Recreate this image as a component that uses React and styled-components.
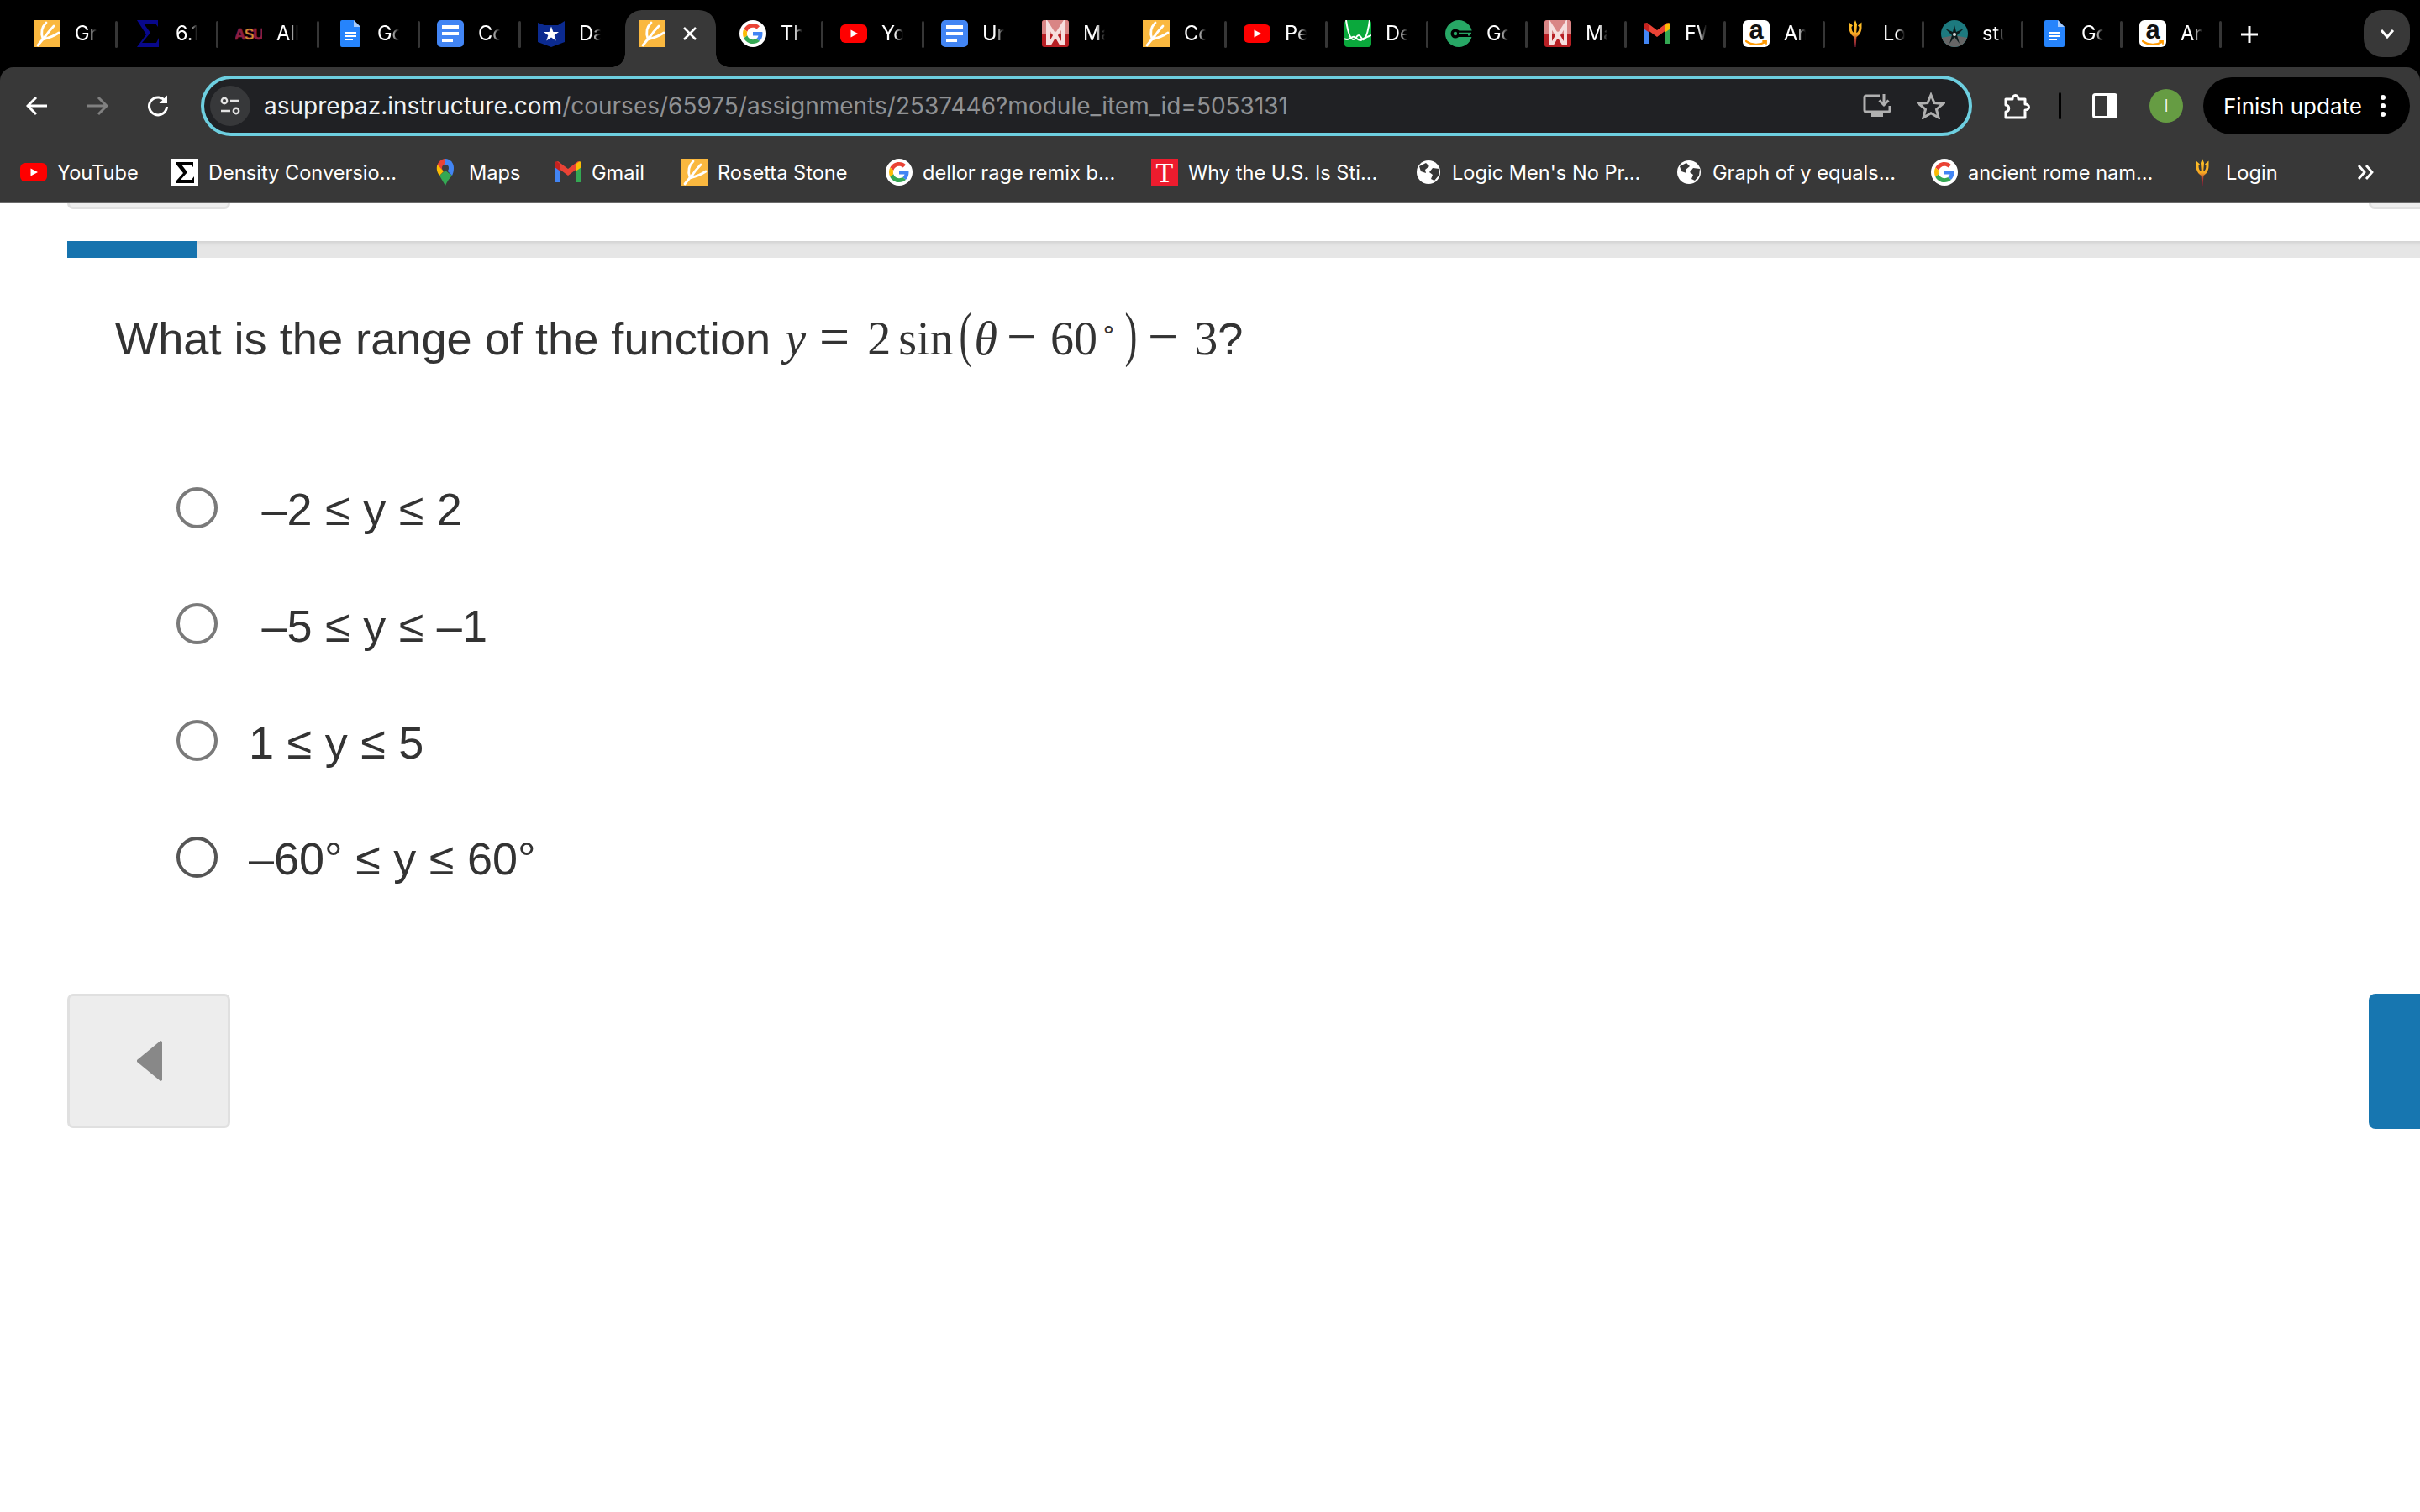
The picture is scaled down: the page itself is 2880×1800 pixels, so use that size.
import styled, { createGlobalStyle } from 'styled-components'

const GlobalStyle = createGlobalStyle`
  html, body {
    margin: 0;
    padding: 0;
    height: 100%;
    background: #fff;
    overflow: hidden;
  }
  #root { height: 100%; }
  * { box-sizing: border-box; }
`

const Window = styled.div`
  width: 2880px;
  height: 1800px;
  overflow: hidden;
  background: #000;
  display: flex;
  flex-direction: column;
  font-family: Inter, "Liberation Sans", sans-serif;
`

/* ---- tab strip ---- */
const TabStrip = styled.div`
  height: 80px;
  flex: none;
  display: flex;
  padding: 12px 12px 0 18px;
  background: #000;
`

const Tab = styled.div`
  position: relative;
  width: ${p => p.$w}px;
  flex: none;
  height: 68px;
  display: flex;
  align-items: center;
  padding: 0 0 12px 22px;
  color: #fff;

  &::after {
    content: '';
    display: ${p => (p.$noSep ? 'none' : 'block')};
    position: absolute;
    right: -2px;
    top: 13px;
    width: 3px;
    height: 32px;
    border-radius: 2px;
    background: #363636;
  }
`

const ActiveTab = styled.div`
  position: relative;
  width: 108px;
  flex: none;
  height: 68px;
  margin: 0 6px;
  display: flex;
  align-items: center;
  padding: 0 0 12px 16px;
  background: #383838;
  border-radius: 20px 20px 0 0;

  &::before, &::after {
    content: '';
    position: absolute;
    bottom: 0;
    width: 16px;
    height: 16px;
  }
  &::before {
    left: -16px;
    background: radial-gradient(circle at 0 0, transparent 15.5px, #383838 16px);
  }
  &::after {
    right: -16px;
    background: radial-gradient(circle at 100% 0, transparent 15.5px, #383838 16px);
  }
`

const FaviconBox = styled.span`
  width: 32px;
  height: 32px;
  flex: none;
  display: block;
  svg { display: block; }
`

const TabTitle = styled.span`
  margin-left: 17px;
  width: 26px;
  overflow: hidden;
  white-space: nowrap;
  font-size: 23.6px;
  line-height: 32px;
  -webkit-mask-image: linear-gradient(to right, #000 60%, transparent 100%);
  mask-image: linear-gradient(to right, #000 60%, transparent 100%);
`

const CloseIcon = styled.svg`
  margin-left: 19px;
  width: 20px;
  height: 20px;
  flex: none;
`

const NewTab = styled.svg`
  margin: 18px 0 0 24px;
  width: 22px;
  height: 22px;
  flex: none;
`

const TabSearch = styled.div`
  margin-left: auto;
  width: 55px;
  height: 56px;
  flex: none;
  display: flex;
  align-items: center;
  justify-content: center;
  border-radius: 22px;
  background: #383838;
`

/* ---- toolbar ---- */
const Toolbar = styled.div`
  height: 92px;
  flex: none;
  display: flex;
  align-items: center;
  padding-left: 8px;
  background: #383838;
  border-radius: 16px 16px 0 0;
`

const NavButton = styled.div`
  width: 72px;
  height: 48px;
  margin-left: ${p => p.$ml || 0}px;
  flex: none;
  display: flex;
  align-items: center;
  justify-content: center;
`

const Omnibox = styled.div`
  width: 2108px;
  height: 72px;
  margin-left: 15px;
  flex: none;
  display: flex;
  align-items: center;
  padding: 0 28px 0 7px;
  background: #202124;
  border: 4px solid #6dcfe0;
  border-radius: 36px;
`

const SiteChip = styled.div`
  width: 48px;
  height: 48px;
  flex: none;
  display: flex;
  align-items: center;
  justify-content: center;
  border-radius: 50%;
  background: #37383a;
`

const Url = styled.div`
  margin-left: 16px;
  font-size: 28px;
  white-space: nowrap;
  color: #8f9194;
`

const Domain = styled.span`
  color: #f1f3f4;
`

const OmniActions = styled.div`
  margin-left: auto;
  display: flex;
  align-items: center;
  gap: 30px;
`

const ToolDivider = styled.div`
  width: 3px;
  height: 32px;
  margin-left: 14px;
  flex: none;
  border-radius: 2px;
  background: #000;
`

const Avatar = styled.div`
  width: 40px;
  height: 40px;
  margin-left: 17px;
  flex: none;
  display: flex;
  align-items: center;
  justify-content: center;
  border-radius: 50%;
  background: #669c43;
  color: #fff;
  font-size: 20px;
  font-weight: 300;
`

const UpdatePill = styled.div`
  width: 246px;
  height: 68px;
  margin-left: 24px;
  flex: none;
  display: flex;
  align-items: center;
  justify-content: space-between;
  padding: 0 28px 0 24px;
  border-radius: 34px;
  background: #000;
  color: #fff;
  font-size: 26px;
  white-space: nowrap;
`

const Kebab = styled.svg`
  width: 8px;
  height: 28px;
  flex: none;
`

/* ---- bookmarks bar ---- */
const BookmarksBar = styled.div`
  height: 70px;
  flex: none;
  display: flex;
  align-items: center;
  padding: 0 0 2px 24px;
  background: #383838;
  border-bottom: 2px solid #6b6b6b;
`

const Bookmark = styled.div`
  width: ${p => p.$w}px;
  flex: none;
  display: flex;
  align-items: center;
  color: #fff;
  font-size: 23.6px;
  white-space: nowrap;
`

const BookmarkLabel = styled.span`
  margin-left: 12px;
`

const Overflow = styled.svg`
  margin-left: 99px;
  width: 22px;
  height: 20px;
  flex: none;
`

/* ---- canvas page ---- */
const Page = styled.main`
  width: 3013px;
  flex: 1;
  padding-left: 80px;
  background: #fff;
  color: #333;
  font-family: "Liberation Sans", Arial, sans-serif;
`

const StubRow = styled.div`
  display: flex;
  justify-content: space-between;
  height: 7px;
`

const Stub = styled.div`
  width: 194px;
  height: 7px;
  background: #eee;
  border: 3px solid #e0e0e0;
  border-top: none;
  border-radius: 0 0 8px 8px;
`

const Progress = styled.div`
  height: 20px;
  margin-top: 38px;
  background: #e6e6e6;
  box-shadow: inset 0 5px 5px -3px #cfcfcf;
`

const ProgressFill = styled.div`
  width: ${p => p.$w}px;
  height: 100%;
  background: #1673ae;
`

const Question = styled.div`
  margin: 51px 0 0 57px;
  height: 80px;
  font-size: 54.2px;
  line-height: 80px;
  white-space: pre;
`

const MathRun = styled.span`
  margin-left: ${p => p.$ml || 0}px;
  font-family: "Liberation Serif", "Times New Roman", serif;
  font-size: 56px;
  font-style: ${p => (p.$italic ? 'italic' : 'normal')};
`

const MathOp = styled.span`
  margin-left: ${p => p.$ml || 0}px;
  font-family: "Liberation Serif", "Times New Roman", serif;
  font-size: 64px;
  font-weight: 300;
`

const MathParen = styled.span`
  display: inline-block;
  margin-left: ${p => p.$ml || 0}px;
  font-family: "Liberation Serif", "Times New Roman", serif;
  font-size: 72px;
  transform: scaleX(0.62);
`

const MathDegree = styled.span`
  margin-left: ${p => p.$ml || 0}px;
  font-family: "Liberation Serif", "Times New Roman", serif;
  font-size: 30px;
  vertical-align: 20px;
  line-height: 0;
`

const Options = styled.div`
  margin: 97px 0 0 130px;
`

const Option = styled.label`
  height: 138.67px;
  display: flex;
  align-items: center;
  gap: 37px;
`

const Radio = styled.span`
  width: 49px;
  height: 49px;
  flex: none;
  border: 4px solid ${p => (p.$hover ? '#555' : '#7a7a7a')};
  border-radius: 50%;
  background: #fff;
`

const OptionText = styled.span`
  padding-top: 4px;
  font-size: 54px;
  line-height: 60px;
  word-spacing: 0.5px;
  white-space: pre;
`

const Footer = styled.div`
  margin-top: 93px;
  display: flex;
  justify-content: space-between;
`

const PrevButton = styled.div`
  width: 194px;
  height: 160px;
  display: flex;
  align-items: center;
  justify-content: center;
  background: #ededed;
  border: 3px solid #e0e0e0;
  border-radius: 7px;
`

const NextButton = styled.div`
  width: 194px;
  height: 161px;
  background: #1776b0;
  border-radius: 8px;
`

/* ---- favicons ---- */
const Rosetta = () => (
  <svg width="32" height="32" viewBox="0 0 32 32">
    <rect width="32" height="32" fill="#fab83f" />
    <g fill="none" stroke="#fff" strokeWidth="2.8" strokeLinecap="round">
      <path d="M5 30L14 19" />
      <path d="M15 3C10 8 8 14 11 22" />
      <path d="M24 7C20 11 16 16 12 22" />
      <path d="M30 15C24 19 19 21 11 23" />
    </g>
  </svg>
)

const SigmaBlue = () => (
  <svg width="32" height="32" viewBox="0 0 32 32">
    <path fill="#08088c" d="M3 0H28V8L25 4H11L19 15L9 27H26L29 21V32H3L14 17Z" />
  </svg>
)

const AsuMark = () => (
  <svg width="32" height="32" viewBox="0 0 32 32">
    <text x="16" y="22.5" textAnchor="middle" fontFamily="Liberation Sans" fontWeight="700" fontSize="18" letterSpacing="-1.4" stroke="#8c1d40" strokeWidth="0.7">
      <tspan fill="#8c1d40">A</tspan><tspan fill="#d19a2a">S</tspan><tspan fill="#8c1d40">U</tspan>
    </text>
  </svg>
)

const DocsPage = () => (
  <svg width="32" height="32" viewBox="0 0 32 32">
    <path fill="#2684fc" d="M7 0H21L29 8V30A2 2 0 0 1 27 32H7A2 2 0 0 1 5 30V2A2 2 0 0 1 7 0Z" />
    <path fill="#a9ccfb" d="M21 0L29 8H21Z" />
    <path fill="#fff" d="M10 14H24V16H10ZM10 18H24V20H10ZM10 22H20V24H10Z" />
  </svg>
)

const DocsSquare = () => (
  <svg width="32" height="32" viewBox="0 0 32 32">
    <rect width="32" height="32" rx="5" fill="#4285f4" />
    <path fill="#fff" d="M6 6H26V10.5H6ZM6 14H26V18H6ZM6 22H19V26H6Z" />
  </svg>
)

const Shield = () => (
  <svg width="32" height="32" viewBox="0 0 32 32">
    <path fill="#0b2a8f" d="M0 3L8 6H24L32 1V26L16 32L0 26Z" />
    <path fill="#fff" d="M16 7.5L18.4 14H25L19.7 18L21.7 24.5L16 20.6L10.3 24.5L12.3 18L7 14H13.6Z" />
  </svg>
)

const GoogleG = () => (
  <svg width="32" height="32" viewBox="0 0 32 32">
    <circle cx="16" cy="16" r="16" fill="#fff" />
    <g transform="translate(4 4) scale(0.5)">
      <path fill="#EA4335" d="M24 9.5c3.54 0 6.71 1.22 9.21 3.6l6.85-6.85C35.9 2.38 30.47 0 24 0 14.62 0 6.51 5.38 2.56 13.22l7.98 6.19C12.43 13.72 17.74 9.5 24 9.5z" />
      <path fill="#4285F4" d="M46.98 24.55c0-1.57-.15-3.09-.38-4.55H24v9.02h12.94c-.58 2.96-2.26 5.48-4.78 7.18l7.73 6c4.51-4.18 7.09-10.36 7.09-17.65z" />
      <path fill="#FBBC05" d="M10.53 28.59c-.48-1.45-.76-2.99-.76-4.59s.27-3.14.76-4.59l-7.98-6.19C.92 16.46 0 20.12 0 24c0 3.88.92 7.54 2.56 10.78l7.97-6.19z" />
      <path fill="#34A853" d="M24 48c6.48 0 11.93-2.13 15.89-5.81l-7.73-6c-2.15 1.45-4.92 2.3-8.16 2.3-6.26 0-11.57-4.22-13.47-9.91l-7.98 6.19C6.51 42.62 14.62 48 24 48z" />
    </g>
  </svg>
)

const YouTube = () => (
  <svg width="32" height="32" viewBox="0 0 32 32">
    <rect y="5" width="32" height="22" rx="6" fill="#f00" />
    <path fill="#fff" d="M12.5 11.5L21 16L12.5 20.5Z" />
  </svg>
)

const Mathia = () => (
  <svg width="32" height="32" viewBox="0 0 32 32">
    <rect width="32" height="32" rx="3" fill="#b71f24" />
    <path fill="#d98585" d="M3 0H29A3 3 0 0 1 32 3V16H0V3A3 3 0 0 1 3 0Z" />
    <path fill="none" stroke="#f6dede" strokeWidth="4" d="M7 29V5L16 19L25 5V29M9 29L16 17L23 29" />
  </svg>
)

const Desmos = () => (
  <svg width="32" height="32" viewBox="0 0 32 32">
    <rect width="32" height="32" rx="4" fill="#0aa83c" />
    <path fill="none" stroke="#fff" strokeWidth="2" d="M2 0C4 14 7 23 11 23C14 23 14 18 17 18C20 18 21 26 24 22C27 18 29 8 30 0" />
    <path fill="none" stroke="#fff" strokeWidth="2" d="M0 22C6 26 8 18 12 20C15 22 18 26 21 23C24 21 27 20 32 18" />
  </svg>
)

const KeyCircle = () => (
  <svg width="32" height="32" viewBox="0 0 32 32">
    <circle cx="16" cy="16" r="16" fill="#27a765" />
    <path fill="#000" d="M13 12.5H32V20H13Z" />
    <circle cx="12" cy="16" r="5.5" fill="#000" />
    <circle cx="12" cy="16" r="2.2" fill="#27a765" />
    <path fill="#27a765" d="M16 14.8H31V16.8H29V18.6H27V16.8H16Z" />
  </svg>
)

const Gmail = () => (
  <svg width="32" height="32" viewBox="0 0 32 32">
    <path fill="#4285f4" d="M0 8V27A1.5 1.5 0 0 0 1.5 28H7V13Z" />
    <path fill="#34a853" d="M25 13V28H30.5A1.5 1.5 0 0 0 32 27V8Z" />
    <path fill="#ea4335" d="M0 8L16 20L32 8L32 5L28 3L16 12L4 3L0 5Z" />
    <path fill="#fbbc04" d="M25 6.5L29 3.5C30.5 2.6 32 4 32 6V10L25 15Z" />
    <path fill="#c5221f" d="M7 6.5L3 3.5C1.5 2.6 0 4 0 6V10L7 15Z" />
  </svg>
)

const Amazon = () => (
  <svg width="32" height="32" viewBox="0 0 32 32">
    <rect width="32" height="32" rx="6" fill="#fff" />
    <text x="16" y="22" textAnchor="middle" fontFamily="Liberation Sans" fontWeight="700" fontSize="31" fill="#111">a</text>
    <path fill="none" stroke="#f90" strokeWidth="2.2" strokeLinecap="round" d="M4 25C11 30 20 30 27 26" />
    <path fill="none" stroke="#f90" strokeWidth="1.8" strokeLinecap="round" d="M24 25H28V28" />
  </svg>
)

const Trident = () => (
  <svg width="32" height="32" viewBox="0 0 32 32">
    <defs>
      <linearGradient id="trident-fade" x1="0" y1="0" x2="0" y2="1">
        <stop offset="0" stopColor="#ffc627" />
        <stop offset="0.52" stopColor="#f7a823" />
        <stop offset="0.72" stopColor="#b5402f" />
        <stop offset="1" stopColor="#7a1a38" />
      </linearGradient>
    </defs>
    <path fill="url(#trident-fade)" d="M16 0L18 5L17.2 15C19.5 14.5 20.5 12 20.5 8L19 6.5L23.5 2.5V9C23.5 14 20.5 18.5 17.4 20L16.6 32H15.4L14.6 20C11.5 18.5 8.5 14 8.5 9V2.5L13 6.5L11.5 8C11.5 12 12.5 14.5 14.8 15L14 5Z" />
  </svg>
)

const Compass = () => (
  <svg width="32" height="32" viewBox="0 0 32 32">
    <circle cx="16" cy="16" r="16" fill="#1d7a7f" />
    <path fill="#666" d="M0.8 21L16 18L31.2 21A16 16 0 0 1 0.8 21Z" />
    <path fill="#0c1b1c" d="M16 6L18 14L27 10L19 18L22 28L16 20L10 28L13 18L5 10L14 14Z" />
    <circle cx="16" cy="17" r="2" fill="#ddd" />
  </svg>
)

const Globe = () => (
  <svg width="32" height="32" viewBox="0 0 32 32">
    <circle cx="16" cy="16" r="14" fill="#fff" />
    <path fill="#383838" d="M5 9L13 5L17 9L12 13L13 17L7 15ZM21 11L29 12L28 20L23 26L19 24L21 19L17 16Z" />
  </svg>
)

const SigmaBox = () => (
  <svg width="32" height="32" viewBox="0 0 32 32">
    <rect width="32" height="32" fill="#fff" />
    <path fill="#000" d="M6 4H26V10L23 7H12L19 16L11 25H24L27 21V29H6V26L14 17L6 7Z" />
  </svg>
)

const TimesT = () => (
  <svg width="32" height="32" viewBox="0 0 32 32">
    <rect width="32" height="32" fill="#ed1c2e" />
    <text x="16" y="28" textAnchor="middle" fontFamily="Liberation Serif" fontSize="34" fill="#fff">T</text>
  </svg>
)

const MapsPin = () => (
  <svg width="32" height="32" viewBox="0 0 32 32">
    <path fill="#34a853" d="M9 20L16 32C18 27 21 23 24 20L16 14Z" />
    <path fill="#fbbc04" d="M6.5 7C5 12 6 16 9 20L17 12Z" />
    <path fill="#ea4335" d="M6.5 7C9 2 12.5 0 16 0L18 8L12 13Z" />
    <path fill="#4285f4" d="M16 0C22 0 26 5 26 11C26 15 25 18 24 20L14 10Z" />
    <circle cx="16" cy="11" r="4" fill="#3d3d3d" />
  </svg>
)

const icons = {
  rosetta: Rosetta, sigma: SigmaBlue, asu: AsuMark, docs: DocsPage, docsSquare: DocsSquare, shield: Shield,
  google: GoogleG, youtube: YouTube, mathia: Mathia, desmos: Desmos, key: KeyCircle, gmail: Gmail,
  amazon: Amazon, trident: Trident, compass: Compass, globe: Globe, sigmaBox: SigmaBox, timesT: TimesT, maps: MapsPin,
}

const Favicon = ({ name }) => {
  const Icon = icons[name]
  return <FaviconBox><Icon /></FaviconBox>
}

const tabs = [
  { icon: 'rosetta', title: 'Gra' },
  { icon: 'sigma', title: '6.1' },
  { icon: 'asu', title: 'All' },
  { icon: 'docs', title: 'Goo' },
  { icon: 'docsSquare', title: 'Cou' },
  { icon: 'shield', title: 'Das', noSep: true },
  { icon: 'rosetta', active: true },
  { icon: 'google', title: 'The' },
  { icon: 'youtube', title: 'You' },
  { icon: 'docsSquare', title: 'Uni', noSep: true },
  { icon: 'mathia', title: 'Mat', noSep: true },
  { icon: 'rosetta', title: 'Cou' },
  { icon: 'youtube', title: 'Pen' },
  { icon: 'desmos', title: 'Des' },
  { icon: 'key', title: 'Goo', w: 118 },
  { icon: 'mathia', title: 'Mat', w: 118 },
  { icon: 'gmail', title: 'FW', w: 118 },
  { icon: 'amazon', title: 'Ama', w: 118 },
  { icon: 'trident', title: 'Log', w: 118 },
  { icon: 'compass', title: 'stu', w: 118 },
  { icon: 'docs', title: 'Goo', w: 118 },
  { icon: 'amazon', title: 'Ama', w: 118 },
]

const bookmarks = [
  { icon: 'youtube', label: 'YouTube', w: 180 },
  { icon: 'sigmaBox', label: 'Density Conversio...', w: 310 },
  { icon: 'maps', label: 'Maps', w: 146 },
  { icon: 'gmail', label: 'Gmail', w: 150 },
  { icon: 'rosetta', label: 'Rosetta Stone', w: 244 },
  { icon: 'google', label: 'dellor rage remix b...', w: 316 },
  { icon: 'timesT', label: 'Why the U.S. Is Sti...', w: 314 },
  { icon: 'globe', label: "Logic Men's No Pr...", w: 310 },
  { icon: 'globe', label: 'Graph of y equals...', w: 304 },
  { icon: 'google', label: 'ancient rome nam...', w: 307 },
  { icon: 'trident', label: 'Login', w: 100 },
]

const answers = [' –2 ≤ y ≤ 2', ' –5 ≤ y ≤ –1', '1 ≤ y ≤ 5', '–60° ≤ y ≤ 60°']

const App = () => {
  return (
    <>
      <GlobalStyle />
      <Window>
        <TabStrip>
          {tabs.map((t, i) =>
            t.active ? (
              <ActiveTab key={i}>
                <Favicon name={t.icon} />
                <CloseIcon viewBox="0 0 20 20">
                  <path d="M3 3L17 17M17 3L3 17" stroke="#fff" strokeWidth="2.6" />
                </CloseIcon>
              </ActiveTab>
            ) : (
              <Tab key={i} $w={t.w || 120} $noSep={t.noSep}>
                <Favicon name={t.icon} />
                <TabTitle>{t.title}</TabTitle>
              </Tab>
            )
          )}
          <NewTab viewBox="0 0 22 22">
            <path d="M11 1V21M1 11H21" stroke="#fff" strokeWidth="3" />
          </NewTab>
          <TabSearch>
            <svg width="18" height="12" viewBox="0 0 18 12">
              <path d="M2 2L9 10L16 2" fill="none" stroke="#fff" strokeWidth="3" />
            </svg>
          </TabSearch>
        </TabStrip>

        <Toolbar>
          <NavButton>
            <svg width="26" height="24" viewBox="0 0 26 24">
              <path d="M25 12H3M12 2L2 12L12 22" fill="none" stroke="#fff" strokeWidth="3" />
            </svg>
          </NavButton>
          <NavButton>
            <svg width="26" height="24" viewBox="0 0 26 24">
              <path d="M1 12H23M14 2L24 12L14 22" fill="none" stroke="#808080" strokeWidth="3" />
            </svg>
          </NavButton>
          <NavButton>
            <svg width="28" height="28" viewBox="0 0 28 28">
              <path d="M23 9A10.5 10.5 0 1 0 24.5 15" fill="none" stroke="#fff" strokeWidth="3" />
              <path d="M25 1.5V11H15.5Z" fill="#fff" />
            </svg>
          </NavButton>
          <Omnibox>
            <SiteChip>
              <svg width="24" height="22" viewBox="0 0 24 22">
                <circle cx="5" cy="5" r="3.2" fill="none" stroke="#e3e3e3" strokeWidth="2.4" />
                <path d="M12 5H23M1 17H12" stroke="#e3e3e3" strokeWidth="2.6" />
                <circle cx="19" cy="17" r="3.2" fill="none" stroke="#e3e3e3" strokeWidth="2.4" />
              </svg>
            </SiteChip>
            <Url>
              <Domain>asuprepaz.instructure.com</Domain>/courses/65975/assignments/2537446?module_item_id=5053131
            </Url>
            <OmniActions>
              <svg width="34" height="30" viewBox="0 0 34 30">
                <path d="M20 3H4A2 2 0 0 0 2 5V20A2 2 0 0 0 4 22H30A2 2 0 0 0 32 20V15" fill="none" stroke="#b0b0b0" strokeWidth="3" />
                <path d="M10 24H24V28H10Z" fill="#b0b0b0" />
                <path d="M25 1V13M19.5 8.5L25 14L30.5 8.5" fill="none" stroke="#b0b0b0" strokeWidth="3" />
              </svg>
              <svg width="34" height="32" viewBox="0 0 34 32">
                <path d="M17 3L21 12.5L31.5 13.4L23.5 20.2L26 30L17 24.8L8 30L10.5 20.2L2.5 13.4L13 12.5Z" fill="none" stroke="#b0b0b0" strokeWidth="3" />
              </svg>
            </OmniActions>
          </Omnibox>
          <NavButton $ml={17}>
            <svg width="34" height="32" viewBox="0 0 34 32">
              <path d="M4 8H12C12 2 19 2 19 8H27V14C33 14 33 21 27 21V30H4V23C9 23 9 15 4 15Z" fill="none" stroke="#fff" strokeWidth="3" strokeLinejoin="round" />
            </svg>
          </NavButton>
          <ToolDivider />
          <NavButton $ml={16}>
            <svg width="30" height="30" viewBox="0 0 30 30">
              <rect x="1.5" y="1.5" width="27" height="27" rx="2" fill="none" stroke="#fff" strokeWidth="3" />
              <rect x="18" y="1.5" width="10.5" height="27" fill="#fff" />
            </svg>
          </NavButton>
          <Avatar>I</Avatar>
          <UpdatePill>
            Finish update
            <Kebab viewBox="0 0 8 28">
              <circle cx="4" cy="4" r="3" fill="#fff" />
              <circle cx="4" cy="14" r="3" fill="#fff" />
              <circle cx="4" cy="24" r="3" fill="#fff" />
            </Kebab>
          </UpdatePill>
        </Toolbar>

        <BookmarksBar>
          {bookmarks.map(b => (
            <Bookmark key={b.label} $w={b.w}>
              <Favicon name={b.icon} />
              <BookmarkLabel>{b.label}</BookmarkLabel>
            </Bookmark>
          ))}
          <Overflow viewBox="0 0 22 20">
            <path d="M3 2L10 10L3 18M12 2L19 10L12 18" fill="none" stroke="#fff" strokeWidth="2.8" />
          </Overflow>
        </BookmarksBar>

        <Page>
          <StubRow>
            <Stub />
            <Stub />
          </StubRow>
          <Progress>
            <ProgressFill $w={155} />
          </Progress>
          <Question>
            What is the range of the function
            <MathRun $italic $ml={17}>y</MathRun>
            <MathOp $ml={16}>=</MathOp>
            <MathRun $ml={21}>2</MathRun>
            <MathRun $ml={9}>sin</MathRun>
            <MathParen $ml={3}>(</MathParen>
            <MathRun $italic $ml={-2}>θ</MathRun>
            <MathOp $ml={11}>−</MathOp>
            <MathRun $ml={16}>60</MathRun>
            <MathDegree $ml={4}>∘</MathDegree>
            <MathParen $ml={5}>)</MathParen>
            <MathOp $ml={8}>−</MathOp>
            <MathRun $ml={19}>3</MathRun>
            ?
          </Question>
          <Options>
            {answers.map((a, i) => (
              <Option key={a}>
                <Radio $hover={i === 3} />
                <OptionText>{a}</OptionText>
              </Option>
            ))}
          </Options>
          <Footer>
            <PrevButton>
              <svg width="31" height="48" viewBox="0 0 31 48">
                <path d="M31 1V47L29 48L1 25V23L29 0Z" fill="#888" />
              </svg>
            </PrevButton>
            <NextButton />
          </Footer>
        </Page>
      </Window>
    </>
  )
}

export default App
